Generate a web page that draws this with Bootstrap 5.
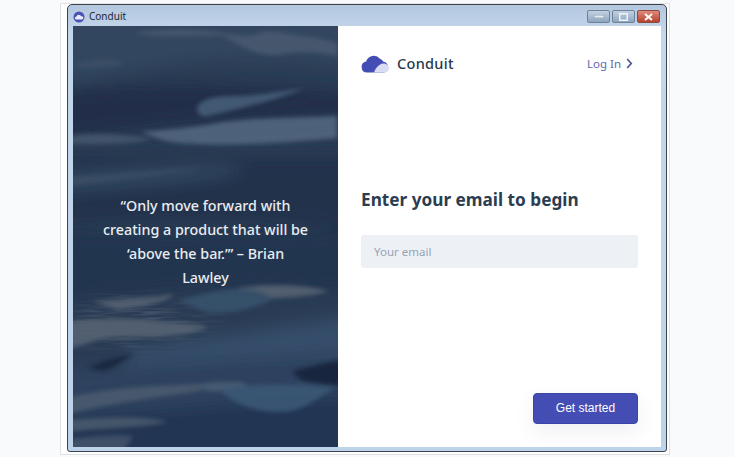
<!DOCTYPE html>
<html lang="en">
<head>
    <meta charset="UTF-8">
    <meta name="viewport" content="width=device-width, initial-scale=1.0">
    <title>Conduit</title>
    <link href="https://cdn.jsdelivr.net/npm/bootstrap@5.3.0/dist/css/bootstrap.min.css" rel="stylesheet">
    <style>
        html, body { height: 100%; }
        body { background: #f9fafc; padding-top: 3px; font-family: "Noto Sans", "Liberation Sans", sans-serif; overflow: hidden; }
        .shot-frame { width: 610px; height: 452px; margin-left: 60px; padding: 0 3px 2px 6px; background: #fff; border: 1px solid #dfe1e4; border-top-color: #e4e6e8; }
        .app-window { width: 600px; height: 448px; background: linear-gradient(#b3c7df, #c4d7ec 30px, #bcd3ea); border: 1px solid #3a434e; border-radius: 5px 5px 3px 3px; padding: 0 5px 5px 5px; }
        .title-bar { height: 21px; font-size: 10px; color: #1d2530; padding-top: 2px; }
        .title-bar svg { margin-right: 4px; }
        .win-btn { width: 23px; height: 13px; border: 1px solid #6f8196; background: linear-gradient(#c3d2e2, #8ea5bf); border-radius: 2px; }
        .win-close { background: linear-gradient(#df8a7b, #b8412f); border-color: #8a4a42; }
        .win-group { gap: 2px; margin-right: 1px; }
        .app-body { height: 421px; background: #fff; }
        .art-panel { width: 265px; background: #2a3c54; padding-top: 10px; }
        .art-bg { position: absolute; inset: 0; }
        .quote-text { font-size: 14.3px; font-weight: 500; line-height: 24px; color: #e9edf1; width: 206px; }
        .form-panel { padding: 27px 23px 23px 23px; }
        .brand-name { font-size: 14.5px; font-weight: 500; color: #27384c; letter-spacing: .3px; }
        .brand-row { gap: 7px; }
        .login-link { font-size: 11.5px; color: #5f68ad; text-decoration: none; margin-right: 5px; gap: 5px; }
        .begin-title { font-size: 17.2px; font-weight: 700; color: #2b3d51; margin: 0 0 25px; }
        .email-form { margin-bottom: 10px; }
        .email-input { height: 33px; background: #edf1f6; border: 0; border-radius: 3px; padding-left: 13px; font-size: 11.5px; }
        .email-input::placeholder { color: #98a4b4; }
        .start-btn { width: 105px; height: 31px; background: #434db3; color: #fff; border: 1px solid #3b45a6; border-radius: 4px; font-family: "Liberation Sans", sans-serif; font-size: 12px; box-shadow: 0 8px 20px rgba(60, 70, 110, .08); padding: 0; }
    </style>
</head>
<body>
    <div class="shot-frame">
        <div class="app-window">
            <!-- Title bar -->
            <div class="title-bar d-flex align-items-center">
                <svg width="12" height="12" viewBox="0 0 12 12"><circle cx="6" cy="6" r="5.5" fill="#4a52b5"/><path d="M3 8.500a1.600 1.600 0 0 1 .4-3.100A2.600 2.600 0 0 1 8.200 5.300 1.600 1.600 0 0 1 9 8.500z" fill="#e8ecf7"/></svg>
                <span>Conduit</span>
                <div class="d-flex ms-auto win-group">
                    <div class="win-btn d-flex align-items-end justify-content-center"><svg class="m-0 mb-1" width="10" height="3"><rect width="10" height="3" fill="#e8eef5" stroke="#5d6f84" stroke-width=".6"/></svg></div>
                    <div class="win-btn d-flex align-items-center justify-content-center"><svg class="m-0" width="9" height="8"><rect x=".75" y=".75" width="7.5" height="6.5" fill="none" stroke="#eef3f8" stroke-width="1.5"/></svg></div>
                    <div class="win-btn win-close d-flex align-items-center justify-content-center"><svg class="m-0" width="9" height="8"><path d="M1 1l7 6M8 1L1 7" stroke="#fff" stroke-width="2"/></svg></div>
                </div>
            </div>
            <div class="app-body d-flex">
                <!-- Left painted panel -->
                <div class="art-panel position-relative d-flex align-items-center justify-content-center flex-shrink-0">
                    <svg class="art-bg" width="265" height="421" viewBox="0 0 265 421">
                        <defs>
                            <filter id="soft" x="-10%" y="-10%" width="120%" height="120%"><feGaussianBlur stdDeviation="2"/></filter>
                            <filter id="softer" x="-10%" y="-10%" width="120%" height="120%"><feGaussianBlur stdDeviation="8"/></filter>
                            <filter id="grain" x="0" y="0" width="100%" height="100%">
                                <feTurbulence type="fractalNoise" baseFrequency=".03 .4" numOctaves="2" seed="4"/>
                                <feColorMatrix values="0 0 0 0 .6  0 0 0 0 .64  0 0 0 0 .7  1.600 0 0 0 -.7"/>
                            </filter>
                            <radialGradient id="grainFade"><stop offset=".4" stop-color="#fff"/><stop offset="1" stop-color="#000"/></radialGradient>
                            <mask id="grainMask"><ellipse cx="60" cy="295" rx="100" ry="36" fill="url(#grainFade)"/></mask>
                        </defs>
                        <g filter="url(#softer)">
                            <path d="M-20 -20H285V40C210 32 150 30 90 40S30 52 -20 58z" fill="#31465f"/>
                            <path d="M-20 66C80 54 190 58 285 68V88C180 94 70 98 -20 116z" fill="#202f48"/>
                            <path d="M-20 130H285V205C180 190 80 190 -20 198z" fill="#21324b"/>
                            <path d="M-20 148C60 142 110 138 150 140S170 152 60 160L-20 166z" fill="#324860"/>
                            <path d="M-20 205H285V268C170 260 80 262 -20 280z" fill="#24354f"/>
                            <path d="M50 325C120 315 200 300 285 290V332C200 335 130 345 60 350z" fill="#344e6a"/>
                            <path d="M-20 345C90 336 180 332 285 326V440H-20z" fill="#2d435e"/>
                            <path d="M-20 392C90 384 210 372 285 370V440H-20z" fill="#243552"/>
                        </g>
                        <rect x="0" y="262" width="170" height="70" filter="url(#grain)" opacity=".28" mask="url(#grainMask)"/>
                        <g filter="url(#soft)" opacity=".88">
                            <path d="M60 7C90 3 125 2 155 8S185 4 200 6 250 12 264 17V30C245 26 222 24 205 29 185 30 165 20 150 9 120 9 90 12 60 7z" fill="#4a5a6f"/>
                            <path d="M0 38C15 34 35 32 47 35S40 41 10 42z" fill="#3c5066"/>
                            <path d="M124 82C126 74 140 70 160 70S205 66 232 62C210 72 170 82 135 90 128 91 124 88 124 82z" fill="#465f79"/>
                            <path d="M67 106C90 104 120 102 145 97S220 92 264 90V112C220 116 170 120 125 118S90 112 67 106z" fill="#526880"/>
                            <path d="M-5 110C20 106 50 108 80 113 60 118 20 119 -5 118z" fill="#45576c"/>
                            <path d="M-5 151C50 148 100 143 135 141 100 148 40 154 -5 160z" fill="#3a4e65"/>
                            <path d="M165 262C190 258 230 258 255 265 240 271 200 273 178 272z" fill="#586473"/>
                            <path d="M105 274C130 268 150 262 170 263S205 272 195 276 150 292 128 284z" fill="#39536d"/>
                            <path d="M20 276C45 272 80 272 100 268 100 274 70 282 45 284z" fill="#546272"/>
                            <path d="M-5 296C30 292 60 292 85 295S125 297 135 301C120 308 90 312 60 311S20 316 -5 323z" fill="#566373"/>
                            <path d="M15 342C30 335 45 330 60 328 50 335 40 342 30 345z" fill="#18263d"/>
                            <path d="M-5 372C30 362 80 360 125 358L135 363C100 370 50 374 -5 388z" fill="#4b5b6e"/>
                            <path d="M-5 394C30 391 70 389 95 396 70 402 30 402 -5 406z" fill="#495a6d"/>
                            <path d="M125 358C140 356 160 355 172 357L175 362C160 364 145 366 135 365z" fill="#4a5f75"/>
                            <path d="M147 364C170 358 220 356 262 362 245 372 235 380 222 384S170 388 147 364z" fill="#3b5876"/>
                            <path d="M220 345C235 342 250 336 270 334V360C250 358 235 358 225 352z" fill="#17243b"/>
                            <path d="M-5 413C20 410 45 408 60 410L50 426H-5z" fill="#42536a"/>
                        </g>
                    </svg>
                    <p class="quote-text position-relative text-center mb-0">“Only move forward with creating a product that will be ‘above the bar.’” – Brian Lawley</p>
                </div>
                <!-- Right form panel -->
                <div class="form-panel flex-grow-1 d-flex flex-column justify-content-between">
                    <div class="d-flex align-items-center justify-content-between">
                        <div class="d-flex align-items-center brand-row">
                            <svg width="29" height="19" viewBox="0 0 29 19"><path d="M6 18.500a5.500 5.500 0 0 1-.9-10.900A8 8 0 0 1 19 4.800a7 7 0 0 1 3.500 3 5.500 5.500 0 0 1 .6 10.700z" fill="#434db3"/><path d="M13 18.500c1.500-4.500 5-8.500 9-9 3.500-.3 6 2.200 6 4.800 0 2.400-2 4.200-5 4.200z" fill="#d9dcf2"/></svg>
                            <span class="brand-name">Conduit</span>
                        </div>
                        <a href="#" class="login-link d-flex align-items-center">Log In
                            <svg width="7" height="11" viewBox="0 0 7 11"><path d="M1.200 1l4 4.500-4 4.500" fill="none" stroke="#4b5596" stroke-width="1.700"/></svg>
                        </a>
                    </div>
                    <form class="email-form">
                        <h1 class="begin-title">Enter your email to begin</h1>
                        <input type="email" class="form-control email-input" placeholder="Your email">
                    </form>
                    <div class="d-flex justify-content-end">
                        <button type="button" class="btn start-btn">Get started</button>
                    </div>
                </div>
            </div>
        </div>
    </div>
    <script src="https://cdn.jsdelivr.net/npm/bootstrap@5.3.0/dist/js/bootstrap.bundle.min.js"></script>
</body>
</html>
